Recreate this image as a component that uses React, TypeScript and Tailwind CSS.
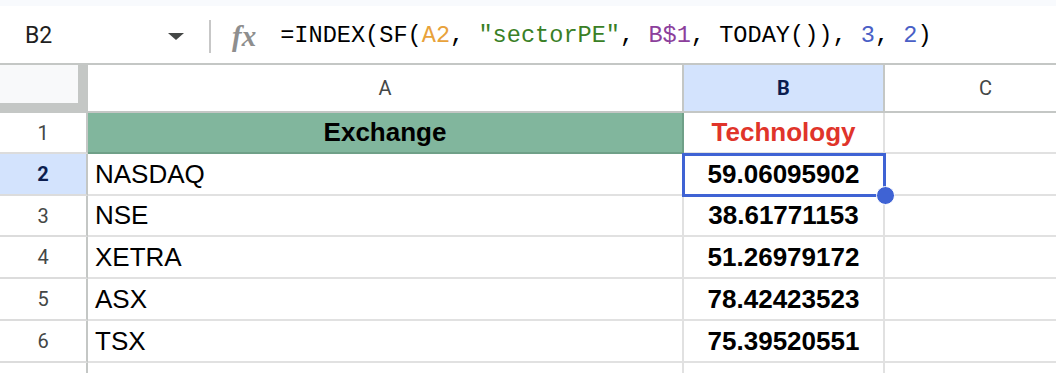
const rows = [
  { n: 1, a: 'Exchange', b: 'Technology', h: 'h-[41px]' },
  { n: 2, a: 'NASDAQ', b: '59.06095902', h: 'h-[42px]' },
  { n: 3, a: 'NSE', b: '38.61771153', h: 'h-[41px]' },
  { n: 4, a: 'XETRA', b: '51.26979172', h: 'h-[42px]' },
  { n: 5, a: 'ASX', b: '78.42423523', h: 'h-[42px]' },
  { n: 6, a: 'TSX', b: '75.39520551', h: 'h-[42px]' },
];

const ui = { fontFamily: 'Roboto, "Liberation Sans", sans-serif' };
const cellFont = { fontFamily: '"Liberation Sans", Arial, sans-serif' };
const mono = { fontFamily: '"Liberation Mono", "DejaVu Sans Mono", monospace' };

function FormulaBar() {
  return (
    <div className="flex h-[54px] items-center border-b-2 border-[#c4c7c5] bg-white pt-[3px] box-content">
      <div className="flex w-[209px] items-center pl-[25px] pr-[25px]" style={ui}>
        <span className="text-[23px] text-[#1f1f1f]">B2</span>
        <span className="ml-auto h-0 w-0 border-l-[8px] border-r-[8px] border-t-[7px] border-l-transparent border-r-transparent border-t-[#444746]" />
      </div>
      <div className="h-[33px] w-[2px] bg-[#c7c7c7]" />
      <span
        className="ml-[21px] text-[29px] font-bold italic leading-none text-[#8e8e8e]"
        style={{ fontFamily: '"Liberation Serif", serif' }}
      >
        fx
      </span>
      <div className="ml-[24px] whitespace-pre text-[23.6px] text-black" style={mono}>
        =INDEX(SF(<span className="text-[#e8a23b]">A2</span>,{' '}
        <span className="text-[#3a7f26]">"sectorPE"</span>,{' '}
        <span className="text-[#8c3f9c]">B$1</span>, TODAY()),{' '}
        <span className="text-[#4a5fc6]">3</span>, <span className="text-[#4a5fc6]">2</span>)
      </div>
    </div>
  );
}

function ColumnHeaders() {
  return (
    <div className="flex h-[48px]" style={ui}>
      <div className="h-[48px] w-[88px] shrink-0 bg-[#c4c7c5]">
        <div className="h-[38px] w-[78px] bg-[#f8f9fa]" />
      </div>
      <div className="flex w-[596px] shrink-0 items-center justify-center border-b-2 border-r-2 border-[#c4c7c5] text-[20px] text-[#444746]">
        A
      </div>
      <div className="flex w-[201px] shrink-0 items-center justify-center border-b-2 border-r-2 border-[#c4c7c5] bg-[#d3e3fd] text-[20px] font-bold text-[#0b1d4f]">
        B
      </div>
      <div className="flex w-[201px] shrink-0 items-center justify-center border-b-2 border-[#c4c7c5] text-[20px] text-[#444746]">
        C
      </div>
    </div>
  );
}

export default function App() {
  return (
    <div className="relative h-[373px] w-[1056px] overflow-hidden bg-white">
      <div className="h-[6px] bg-[#f8fafd]" />
      <FormulaBar />
      <ColumnHeaders />
      {rows.map((r) => (
        <div key={r.n} className={`flex ${r.h}`}>
          <div
            className={`flex w-[88px] shrink-0 items-center justify-center border-b-2 border-r-2 border-b-[#dcdcdc] border-r-[#c4c7c5] text-[20px] ${
              r.n === 2 ? 'bg-[#d3e3fd] font-bold text-[#0b1d4f]' : 'text-[#444746]'
            }`}
            style={ui}
          >
            {r.n}
          </div>
          <div
            className={`flex w-[596px] shrink-0 items-center border-b-2 border-r-2 text-[26px] text-black ${
              r.n === 1
                ? 'justify-center border-[#6fa088] bg-[#81b69d] font-bold'
                : 'border-[#e1e1e1] pl-[7px]'
            }`}
            style={cellFont}
          >
            {r.a}
          </div>
          <div
            className={`flex w-[201px] shrink-0 items-center justify-center border-b-2 border-r-2 border-[#e1e1e1] text-[26px] font-bold ${
              r.n === 1 ? 'text-[#e0342a]' : 'text-black'
            }`}
            style={cellFont}
          >
            {r.b}
          </div>
          <div className="flex-1 border-b-2 border-[#e1e1e1]" />
        </div>
      ))}
      <div className="flex h-[20px]">
        <div className="w-[88px] shrink-0 border-r-2 border-[#c4c7c5]" />
        <div className="w-[596px] shrink-0 border-r-2 border-[#e1e1e1]" />
        <div className="w-[201px] shrink-0 border-r-2 border-[#e1e1e1]" />
      </div>

      {/* active cell B2 */}
      <div className="absolute left-[682px] top-[153px] h-[44px] w-[204px] border-[3px] border-[#3f63d4]" />
      <div className="absolute left-[876px] top-[186px] h-[19px] w-[19px] rounded-full border border-white bg-[#3f63d4]" />
    </div>
  );
}
